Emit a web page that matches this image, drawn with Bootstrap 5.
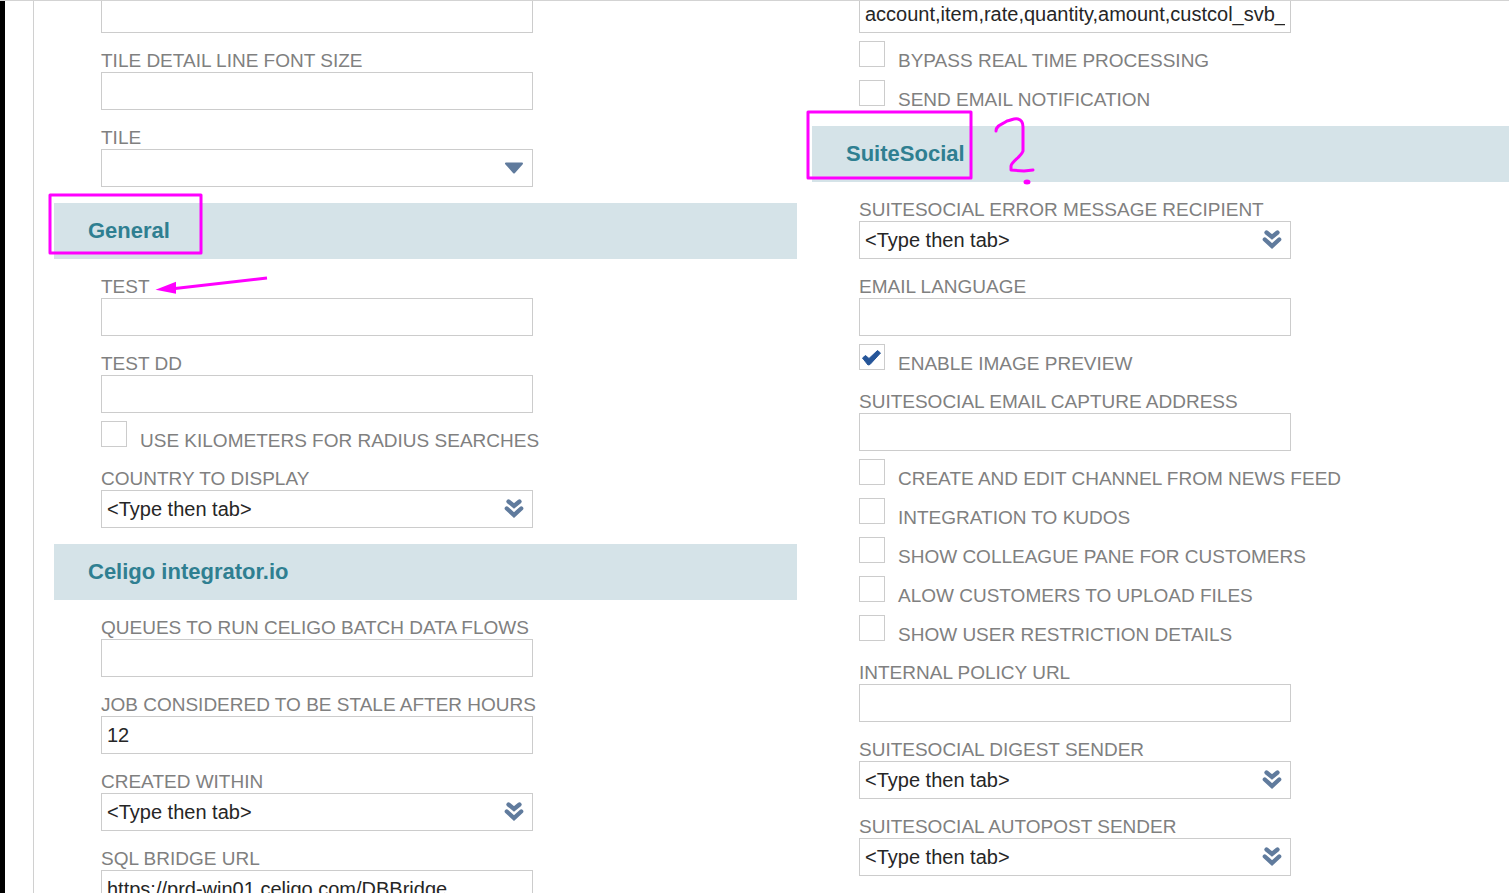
<!DOCTYPE html>
<html lang="en">
<head>
<meta charset="utf-8">
<meta name="viewport" content="width=device-width, initial-scale=1">
<title>General Preferences</title>
<link href="https://cdn.jsdelivr.net/npm/bootstrap@5.3.0/dist/css/bootstrap.min.css" rel="stylesheet">
<style>
  body { font-family: "Liberation Sans", Arial, sans-serif; background: #fff; }
  .pref-page { border-top: 1px solid #d3d3d3; }
  .page-edge { width: 5px; background: #000; }
  .pref-panel { margin-left: 28px; padding-left: 20px; border-left: 1px solid #d0d0d0; }
  /* the form is scrolled part of the way down */
  .pref-grid { display: grid; grid-template-columns: minmax(0, 743fr) minmax(0, 697fr); column-gap: 15px; margin-top: -14px; }
  .pref-field, .check-group { padding-left: 47px; }
  .pref-field { padding-top: 8px; padding-bottom: 8px; }
  .pref-label { display: block; font-size: 19px; line-height: 23px; height: 23px; color: #808080; white-space: nowrap; }
  .pref-box { width: 432px; max-width: 100%; }
  .pref-box .form-control, .pref-box .form-select {
    height: 38px; padding: 0 5px; font-size: 20px; line-height: 24px; color: #262626;
    border: 1px solid #cccccc; border-radius: 0; background: #fff; box-shadow: none;
  }
  .field-icon { position: absolute; right: 9px; top: 9px; width: 20px; height: 20px; padding: 0; border: 0; background: none; display: flex; pointer-events: none; }
  button.field-icon { pointer-events: auto; }
  .check-group { display: grid; row-gap: 13px; padding-bottom: 12px; }
  .check-row { display: flex; height: 26px; gap: 13px; }
  .check-row .form-check-input { width: 26px; height: 26px; margin: 0; flex: none; border: 1px solid #cccccc; border-radius: 0; background-color: #fff; box-shadow: none; }
  .check-row .form-check-input:checked {
    background-color: #fff;
    background-image: url("data:image/svg+xml,%3Csvg xmlns='http://www.w3.org/2000/svg' viewBox='0 0 24 24'%3E%3Cpath d='M2.5 13 5.5 10.500 9 13.500 17.500 5.500 20.500 8 10 19.500 8 20Z' fill='%23255599' stroke='%23255599' stroke-linejoin='round'/%3E%3C/svg%3E");
    background-size: 24px 24px;
  }
  .check-row .pref-label { margin-top: 8px; }
  .pref-band { position: relative; display: flex; align-items: center; height: 56px; margin: 8px 0; padding-left: 34px; background: #d5e3e8; }
  .pref-band h2 { margin: 0; font-size: 22px; line-height: 26px; font-weight: 700; color: #2f7f91; }
  .markup { position: absolute; overflow: visible; fill: none; stroke: #ff00ff; stroke-width: 3; stroke-linejoin: round; stroke-linecap: round; pointer-events: none; z-index: 2; }
  .markup-box { left: -6px; top: -10px; }
  .markup-arrow { left: 99px; top: 70px; }
  .markup-box-social { left: -6px; top: -16px; }
  .markup-question { left: 180px; top: -10px; }
</style>
</head>
<body>
<svg class="d-none" aria-hidden="true">
  <symbol id="chevrons" viewBox="0 0 20 20"><path d="M4.500 2.500 10 7 15.500 2.500M2.800 9.500 10 16 17.200 9.500" fill="none" stroke="#607b9d" stroke-width="4.300" stroke-linecap="round" stroke-linejoin="miter"/></symbol>
  <symbol id="caret" viewBox="0 0 20 20"><path d="M2 5.500H18L10 14.500Z" fill="#607b9d" stroke="#607b9d" stroke-width="2" stroke-linejoin="round"/></symbol>
</svg>
<main class="pref-page d-flex vh-100 overflow-hidden">
  <div class="page-edge flex-shrink-0"></div>
  <form class="pref-panel flex-grow-1">
    <div class="pref-grid">
      <div>
        <div class="pref-field"><div class="pref-box"><input type="text" class="form-control" aria-label="Tile font size"></div></div>
        <div class="pref-field"><label class="pref-label" for="tileDetail">TILE DETAIL LINE FONT SIZE</label><div class="pref-box"><input id="tileDetail" type="text" class="form-control"></div></div>
        <div class="pref-field"><label class="pref-label" for="tile">TILE</label><div class="pref-box position-relative"><select id="tile" class="form-select"><option></option></select><span class="field-icon"><svg width="20" height="20"><use href="#caret"/></svg></span></div></div>

        <div class="pref-band"><h2>General</h2>
          <svg class="markup markup-box" width="155" height="62" aria-hidden="true"><rect x="2" y="2" width="151" height="58"/></svg>
          <svg class="markup markup-arrow" width="116" height="26" aria-hidden="true"><path d="M22 15.500 114 5" stroke-linecap="butt"/><path d="M2.500 16.800 23 8.700V20.700Z" fill="#ff00ff" stroke="none"/></svg>
        </div>
        <div class="pref-field"><label class="pref-label" for="test">TEST</label><div class="pref-box"><input id="test" type="text" class="form-control"></div></div>
        <div class="pref-field"><label class="pref-label" for="testDd">TEST DD</label><div class="pref-box"><input id="testDd" type="text" class="form-control"></div></div>
        <div class="check-group">
          <div class="check-row"><input id="km" type="checkbox" class="form-check-input"><label class="pref-label" for="km">USE KILOMETERS FOR RADIUS SEARCHES</label></div>
        </div>
        <div class="pref-field"><label class="pref-label" for="country">COUNTRY TO DISPLAY</label><div class="pref-box position-relative"><input id="country" type="text" class="form-control" value="&lt;Type then tab&gt;"><button type="button" class="field-icon" aria-label="List"><svg width="20" height="20"><use href="#chevrons"/></svg></button></div></div>

        <div class="pref-band"><h2>Celigo integrator.io</h2></div>
        <div class="pref-field"><label class="pref-label" for="queues">QUEUES TO RUN CELIGO BATCH DATA FLOWS</label><div class="pref-box"><input id="queues" type="text" class="form-control"></div></div>
        <div class="pref-field"><label class="pref-label" for="stale">JOB CONSIDERED TO BE STALE AFTER HOURS</label><div class="pref-box"><input id="stale" type="text" class="form-control" value="12"></div></div>
        <div class="pref-field"><label class="pref-label" for="created">CREATED WITHIN</label><div class="pref-box position-relative"><input id="created" type="text" class="form-control" value="&lt;Type then tab&gt;"><button type="button" class="field-icon" aria-label="List"><svg width="20" height="20"><use href="#chevrons"/></svg></button></div></div>
        <div class="pref-field"><label class="pref-label" for="bridge">SQL BRIDGE URL</label><div class="pref-box"><input id="bridge" type="text" class="form-control" value="https://prd-win01.celigo.com/DBBridge"></div></div>
      </div>

      <div>
        <div class="pref-field"><div class="pref-box"><input type="text" class="form-control" aria-label="Columns" value="account,item,rate,quantity,amount,custcol_svb_"></div></div>
        <div class="check-group">
          <div class="check-row"><input id="bypass" type="checkbox" class="form-check-input"><label class="pref-label" for="bypass">BYPASS REAL TIME PROCESSING</label></div>
          <div class="check-row"><input id="notify" type="checkbox" class="form-check-input"><label class="pref-label" for="notify">SEND EMAIL NOTIFICATION</label></div>
        </div>

        <div class="pref-band"><h2>SuiteSocial</h2>
          <svg class="markup markup-box-social" width="167" height="70" aria-hidden="true"><rect x="2" y="2" width="163" height="66"/></svg>
          <svg class="markup markup-question" width="50" height="80" aria-hidden="true"><path d="M4 15C4 9 11 8 15 5C20 4 22 2 26 3C30 4 31 7 31 11L31 35C29 41 20 45 19 50V54L32 55 41 54"/><ellipse cx="35" cy="66" rx="2" ry="1" fill="#ff00ff"/></svg>
        </div>
        <div class="pref-field"><label class="pref-label" for="recipient">SUITESOCIAL ERROR MESSAGE RECIPIENT</label><div class="pref-box position-relative"><input id="recipient" type="text" class="form-control" value="&lt;Type then tab&gt;"><button type="button" class="field-icon" aria-label="List"><svg width="20" height="20"><use href="#chevrons"/></svg></button></div></div>
        <div class="pref-field"><label class="pref-label" for="lang">EMAIL LANGUAGE</label><div class="pref-box"><input id="lang" type="text" class="form-control"></div></div>
        <div class="check-group">
          <div class="check-row"><input id="preview" type="checkbox" class="form-check-input" checked><label class="pref-label" for="preview">ENABLE IMAGE PREVIEW</label></div>
        </div>
        <div class="pref-field"><label class="pref-label" for="capture">SUITESOCIAL EMAIL CAPTURE ADDRESS</label><div class="pref-box"><input id="capture" type="text" class="form-control"></div></div>
        <div class="check-group">
          <div class="check-row"><input id="channel" type="checkbox" class="form-check-input"><label class="pref-label" for="channel">CREATE AND EDIT CHANNEL FROM NEWS FEED</label></div>
          <div class="check-row"><input id="kudos" type="checkbox" class="form-check-input"><label class="pref-label" for="kudos">INTEGRATION TO KUDOS</label></div>
          <div class="check-row"><input id="pane" type="checkbox" class="form-check-input"><label class="pref-label" for="pane">SHOW COLLEAGUE PANE FOR CUSTOMERS</label></div>
          <div class="check-row"><input id="upload" type="checkbox" class="form-check-input"><label class="pref-label" for="upload">ALOW CUSTOMERS TO UPLOAD FILES</label></div>
          <div class="check-row"><input id="restrict" type="checkbox" class="form-check-input"><label class="pref-label" for="restrict">SHOW USER RESTRICTION DETAILS</label></div>
        </div>
        <div class="pref-field"><label class="pref-label" for="policy">INTERNAL POLICY URL</label><div class="pref-box"><input id="policy" type="text" class="form-control"></div></div>
        <div class="pref-field"><label class="pref-label" for="digest">SUITESOCIAL DIGEST SENDER</label><div class="pref-box position-relative"><input id="digest" type="text" class="form-control" value="&lt;Type then tab&gt;"><button type="button" class="field-icon" aria-label="List"><svg width="20" height="20"><use href="#chevrons"/></svg></button></div></div>
        <div class="pref-field"><label class="pref-label" for="autopost">SUITESOCIAL AUTOPOST SENDER</label><div class="pref-box position-relative"><input id="autopost" type="text" class="form-control" value="&lt;Type then tab&gt;"><button type="button" class="field-icon" aria-label="List"><svg width="20" height="20"><use href="#chevrons"/></svg></button></div></div>
      </div>
    </div>
  </form>
</main>
<script src="https://cdn.jsdelivr.net/npm/bootstrap@5.3.0/dist/js/bootstrap.bundle.min.js"></script>
</body>
</html>
